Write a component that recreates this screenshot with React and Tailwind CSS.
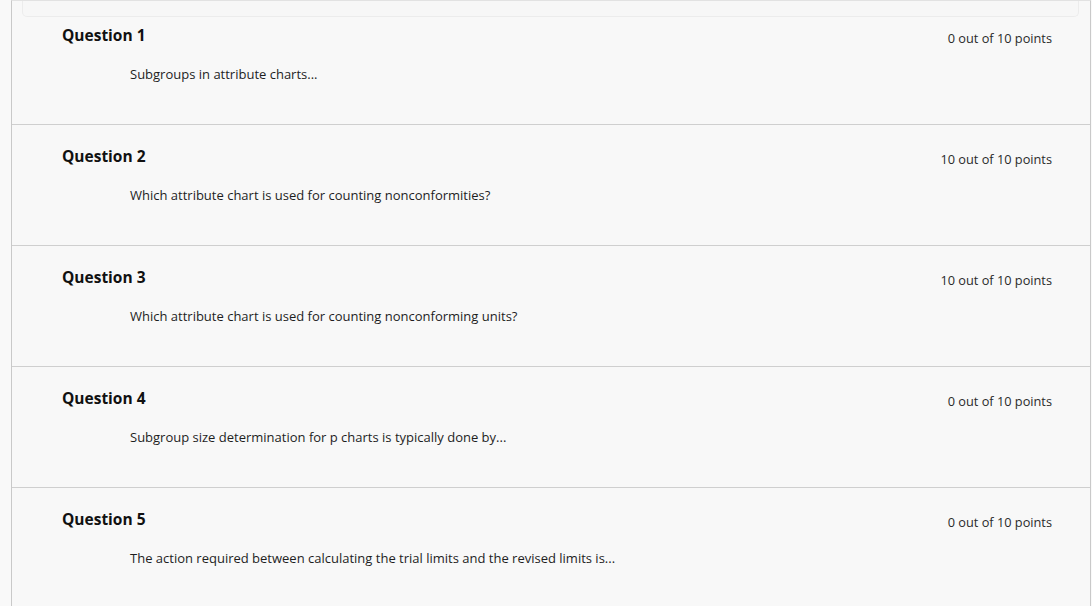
import React from "react";

const questions = [
  { n: 1, pts: "0 out of 10 points", text: "Subgroups in attribute charts..." },
  { n: 2, pts: "10 out of 10 points", text: "Which attribute chart is used for counting nonconformities?" },
  { n: 3, pts: "10 out of 10 points", text: "Which attribute chart is used for counting nonconforming units?" },
  { n: 4, pts: "0 out of 10 points", text: "Subgroup size determination for p charts is typically done by..." },
  { n: 5, pts: "0 out of 10 points", text: "The action required between calculating the trial limits and the revised limits is..." },
];

function Row({ q, first }) {
  return (
    <div
      className={
        first
          ? "relative h-[123px] pl-[50px] pr-[38px] pt-[24px]"
          : "relative h-[121px] border-t border-[#cfcfcf] pl-[50px] pr-[38px] pt-[21px]"
      }
    >
      {first && (
        <div className="absolute top-0 left-[10px] right-[11px] h-[16px] border-b border-l border-r border-[#ececec] rounded-b-[5px] bg-[#f7f7f7]" />
      )}
      <div className="flex items-start justify-between">
        <div className="text-[15.5px] leading-[20px] font-bold text-[#111111]">Question {q.n}</div>
        <div className="mt-[4px] text-[12.75px] leading-[18px] text-[#2a2a2a]">{q.pts}</div>
      </div>
      <div className="mt-[18px] ml-[68px] text-[13px] leading-[18px] text-[#1e1e1e]">{q.text}</div>
    </div>
  );
}

export default function App() {
  return (
    <div
      className="w-[1092px] h-[606px] overflow-hidden bg-[#f9f9f9]"
      style={{ fontFamily: '"Open Sans", "Noto Sans", sans-serif' }}
    >
      <div className="ml-[11px] w-[1080px] border-l border-r border-t border-l-[#c9c9c9] border-r-[#c9c9c9] border-t-[#e2e2e2] bg-[#f8f8f8]">
        {questions.map((q, i) => (
          <Row key={q.n} q={q} first={i === 0} />
        ))}
      </div>
    </div>
  );
}
